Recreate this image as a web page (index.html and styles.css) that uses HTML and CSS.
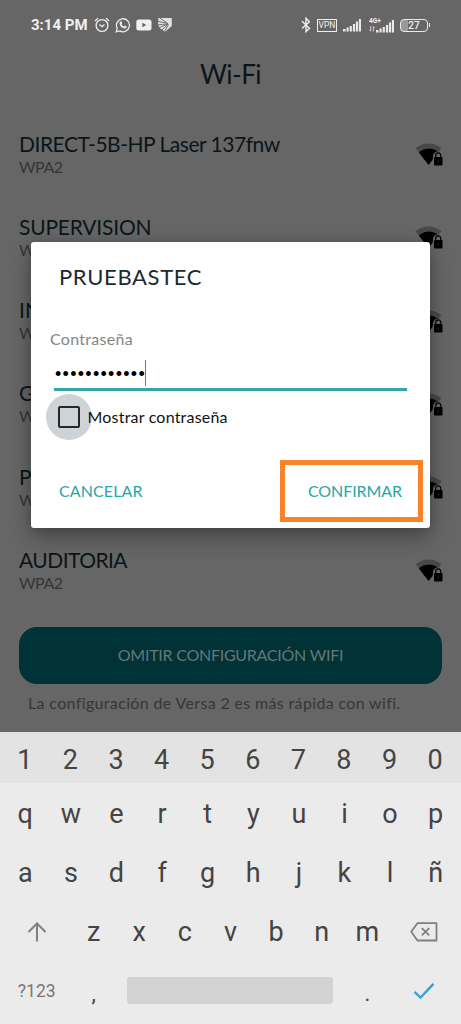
FILE: index.html
```html
<!DOCTYPE html>
<html lang="es">
<head>
<meta charset="utf-8">
<title>Wi-Fi</title>
<link rel="stylesheet" href="styles.css">
</head>
<body>
<svg width="0" height="0" class="defs" aria-hidden="true">
  <symbol id="wifi-lock" viewBox="0 0 28 24">
    <path d="M0.500 5.200C8-1.200 19-1.200 26.500 5.200L23 9.300C17.500 4.300 9.500 4.300 3.900 9.300Z" fill="#484848"/>
    <path d="M3.700 9.300C9.500 4.300 17.500 4.300 22.500 8.600C19 9.300 18 11 18 14.300L17.500 17L13.500 22Z" fill="#000"/>
    <rect x="19" y="14" width="8.500" height="8.500" rx="1" fill="#000"/>
    <path d="M20.700 14.500V12.500a2.550 2.550 0 0 1 5.100 0V14.500" fill="none" stroke="#000" stroke-width="1.200"/>
    <circle cx="23.250" cy="18.200" r=".8" fill="#333"/>
  </symbol>
</svg>
<div class="screen">
  <header class="status">
    <span class="clock">3:14 PM</span>
    <div class="status-left">
      <svg width="16" height="16" viewBox="0 0 16 16" fill="none" stroke="#e9e9e9" stroke-width="1.400"><circle cx="8" cy="8.500" r="5.900"/><path d="M1 4L4 1.200M15 4L12 1.200M5.400 7.500L8 9.600L10.500 7.500"/></svg>
      <svg width="16" height="16" viewBox="0 0 16 16"><path d="M1.200 14.900L2.200 11.300A6.500 6.500 0 1 1 4.700 13.900Z" fill="none" stroke="#e9e9e9" stroke-width="1.300"/><path d="M5.300 4.400L6.500 4.300L7.300 6.300L6.600 7.300Q7.400 8.900 9 9.600L10 8.600L11.800 9.500Q11.800 11.500 9.700 11.500Q5.200 10.700 4.500 6.400Q4.500 5 5.300 4.400Z" fill="#e9e9e9"/></svg>
      <svg width="16" height="12" viewBox="0 0 16 12"><rect x=".3" y=".5" width="15.200" height="11" rx="2.500" fill="#efefef"/><path d="M6.300 3.700V8.300L10.300 6Z" fill="#666"/></svg>
      <svg width="16" height="16" viewBox="0 0 16 16"><path d="M1.500 1H14.800V9L8 14.800L2.500 11L1 7Z" fill="#e0e0e0"/><path d="M0 4.300L10.500 6.200L3 1.200M0 8L11 6.800L1 11.300M11 7.300L4 13.800M11.500 7.500L7.500 14.500" stroke="#666" stroke-width=".9" fill="none"/></svg>
    </div>
    <div class="status-right">
      <svg width="10" height="16" viewBox="0 0 10 16" fill="none" stroke="#eee" stroke-width="1.400"><path d="M1 4.300L8.400 11.200L5 14.600V1.200L8.400 4.700L1 11.600"/></svg>
      <span class="vpn">VPN</span>
      <svg class="signal" width="18" height="13" viewBox="0 0 18 13" fill="#e9e9e9"><path d="M0 10h2.500v2.500H0zM3.500 8.500h2.200v4H3.500zM6.700 7h2.200v5.500H6.700zM9.900 5h2.200v7.500H9.900zM12.900 2.500h2.200v10h-2.200zM15.900 0H18v12.500h-2.100z"/></svg>
      <div class="data">
        <span class="net">4G+</span>
        <svg class="updown" width="6" height="6" viewBox="0 0 6 6" fill="none" stroke="#ddd" stroke-width=".9"><path d="M1.700 0V5M.3 3.800L1.700 5.200M4.300 5.500V.6M4.300.6L5.800 2"/></svg>
        <svg class="bars" width="18" height="13" viewBox="0 0 18 13" fill="#e9e9e9"><path d="M0 10h2.500v2.500H0zM3.500 8.500h2.200v4H3.500zM6.700 7h2.200v5.500H6.700zM9.900 5h2.200v7.500H9.900zM12.900 2.500h2.200v10h-2.200zM15.900 0H18v12.500h-2.100z"/></svg>
      </div>
      <span class="battery">27</span>
    </div>
  </header>
  <h1 class="title">Wi-Fi</h1>
  <ul class="networks">
    <li><div><b class="n1">DIRECT-5B-HP Laser 137fnw</b><i>WPA2</i></div><svg><use href="#wifi-lock"/></svg></li>
    <li><div><b class="n2">SUPERVISION</b><i>WPA2</i></div><svg><use href="#wifi-lock"/></svg></li>
    <li><div><b>IN</b><i>WPA2</i></div><svg><use href="#wifi-lock"/></svg></li>
    <li><div><b>G</b><i>WPA2</i></div><svg><use href="#wifi-lock"/></svg></li>
    <li><div><b>P</b><i>WPA2</i></div><svg><use href="#wifi-lock"/></svg></li>
    <li><div><b class="n6">AUDITORIA</b><i>WPA2</i></div><svg><use href="#wifi-lock"/></svg></li>
  </ul>
  <button class="skip">OMITIR CONFIGURACIÓN WIFI</button>
  <p class="note">La configuración de Versa 2 es más rápida con wifi.</p>

  <section class="keyboard">
    <div class="row digits"><span>1</span><span>2</span><span>3</span><span>4</span><span>5</span><span>6</span><span>7</span><span>8</span><span>9</span><span>0</span></div>
    <div class="row"><span>q</span><span>w</span><span>e</span><span>r</span><span>t</span><span>y</span><span>u</span><span>i</span><span>o</span><span>p</span></div>
    <div class="row"><span>a</span><span>s</span><span>d</span><span>f</span><span>g</span><span>h</span><span>j</span><span>k</span><span>l</span><span>ñ</span></div>
    <div class="row">
      <span class="wide"><svg width="20" height="22" viewBox="0 0 20 22" fill="none" stroke="#808080" stroke-width="2"><path d="M10 20.500V3M1.500 11L10 2.500L18.500 11"/></svg></span>
      <span>z</span><span>x</span><span>c</span><span>v</span><span>b</span><span>n</span><span>m</span>
      <span class="wide"><svg width="28" height="20" viewBox="0 0 28 20" fill="none" stroke="#808080" stroke-width="1.800"><path d="M7.500 1.200H26.500V18.500H7.500L1.200 9.800Z" stroke-linejoin="round"/><path d="M11.800 6.200L19.200 13.400M19.200 6.200L11.800 13.400"/></svg></span>
    </div>
    <div class="row">
      <span class="wide symbols">?123</span><span class="comma">,</span>
      <span class="space"></span><span class="period">.</span>
      <span class="wide"><svg width="22" height="18" viewBox="0 0 22 18" fill="none" stroke="#3d9fd6" stroke-width="2.400"><path d="M1.500 9.800L7.500 15.500L20.500 1.800"/></svg></span>
    </div>
  </section>

  <section class="dialog">
    <h2>PRUEBASTEC</h2>
    <label class="label">Contraseña</label>
    <div class="field"><span class="dots">••••••••••••</span><span class="caret"></span></div>
    <div class="check"><span class="ripple"><span class="box"></span></span><span class="show">Mostrar contraseña</span></div>
    <div class="actions"><span class="cancel">CANCELAR</span><span class="confirm">CONFIRMAR</span></div>
  </section>
</div>
</body>
</html>
```
FILE: styles.css
```css
* { box-sizing: border-box; }
body { margin: 0; background: #666; font-family: Lato, "Open Sans", sans-serif; }
.defs { position: absolute; }
.screen { position: relative; width: 461px; height: 1024px; overflow: hidden; display: flex; flex-direction: column; background: #666; }

.status { height: 50px; padding: 0 32px 0 31px; display: flex; align-items: center; color: #f0f0f0; font-family: Roboto, sans-serif; }
.clock { font-size: 15px; font-weight: 700; width: 62.500px; white-space: nowrap; }
.status-left { display: flex; align-items: center; gap: 5.300px; }
.status-right { margin-left: auto; display: flex; align-items: center; }
.vpn { width: 20px; height: 13px; margin: 0 6px 0 6px; border: 1px solid #eee; font-size: 8.500px; line-height: 11.500px; font-weight: 400; display: flex; justify-content: center; }
.data { width: 25px; height: 15px; margin: 0 6px 0 8px; display: grid; grid-template: 7px 8px / 7px 18px; }
.net { font-size: 6.500px; font-weight: 700; line-height: 6px; z-index: 1; }
.updown { grid-row: 2; align-self: center; }
.bars { grid-area: 1 / 2 / 3 / 3; align-self: end; }
.battery { position: relative; width: 28px; height: 13px; margin-right: 1px; border: 1.500px solid #e9e9e9; border-radius: 4px; font-size: 10px; font-weight: 500; line-height: 11px; text-align: center; background: linear-gradient(90deg, #999 7px, transparent 7px); }
.battery::after { content: ""; position: absolute; right: -3px; top: 3px; width: 1.500px; height: 4px; background: #e9e9e9; }

.title { margin: 8px 0 0; height: 32px; line-height: 32px; text-align: center; font-size: 26px; font-weight: 400; letter-spacing: -.5px; color: #0b1519; }
.networks { list-style: none; margin: 0; padding: 40.500px 18px 0 19px; height: 537px; color: #0b1519; }
.networks li { height: 83.300px; display: flex; justify-content: space-between; }
.networks b { display: block; font-weight: 400; font-size: 21px; line-height: 26px; white-space: nowrap; }
.networks .n1 { letter-spacing: -.48px; }
.networks .n2 { letter-spacing: -.2px; }
.networks .n6 { letter-spacing: -.55px; }
.networks i { display: block; font-style: normal; font-size: 16px; line-height: 20px; letter-spacing: -.5px; color: #353535; }
.networks svg { width: 28px; height: 24px; margin-top: 12.500px; }
.skip { flex: none; height: 57px; margin: 0 19px; padding: 0 0 2px; border: 0; border-radius: 18px; background: #003236; color: #667779; font: 400 16px Lato, sans-serif; letter-spacing: -.26px; white-space: nowrap; }
.note { margin: 7px 0 0 28px; height: 41px; font-size: 16px; line-height: 24px; letter-spacing: .35px; color: #363636; white-space: nowrap; }

.keyboard { height: 292px; background: #ebebeb; color: #444; font: 27px Roboto, sans-serif; }
.row { display: flex; height: 59.250px; padding: 2px 2.500px 0; }
.row span { width: 45.600px; display: flex; align-items: center; justify-content: center; }
.row.digits { height: 51px; padding: 4px 2px 0; background: #e3e3e3; }
.row .wide { width: 68.400px; }
.row .symbols { font-size: 17.500px; color: #777; }
.row .comma { font-size: 22px; padding-top: 4px; }
.row .period { font-size: 22px; padding-top: 4px; }
.row .space { width: 206px; height: 27px; margin: 14px 11px 0 11px; border-radius: 3px; background: #d2d2d2; }

.dialog { position: absolute; left: 31px; top: 242px; width: 399px; height: 286px; border-radius: 3px; background: #fff; box-shadow: 0 10px 22px rgba(0,0,0,.3), 0 0 10px rgba(0,0,0,.15); }
.dialog h2 { margin: 21px 0 0 28px; font-size: 22px; font-weight: 400; line-height: 28px; letter-spacing: .65px; color: #1b2931; }
.label { display: block; margin: 38px 0 0 19px; font-size: 16px; line-height: 20px; letter-spacing: .3px; color: #858585; }
.field { display: flex; margin: 10px 23px 0 23px; height: 32px; border-bottom: 3px solid #34a6aa; }
.dots { padding-left: 1px; font: 18px "Liberation Sans", sans-serif; line-height: 30px; letter-spacing: 1.280px; color: #000; }
.caret { width: 1px; height: 26px; margin: 1px 0 0 -1px; background: #777; }
.check { display: flex; align-items: center; height: 46px; margin: 3px 0 0 14.500px; }
.ripple { width: 46px; height: 46px; border-radius: 50%; background: #cfd3d5; display: flex; align-items: center; justify-content: center; }
.box { width: 22px; height: 22px; border: 2px solid #1b2a35; border-radius: 2px; }
.show { margin: 0 0 2px -4px; font-size: 16px; letter-spacing: .2px; color: #111; }
.actions { display: flex; justify-content: space-between; align-items: center; margin: 20px 7px 0 28px; height: 62px; font-size: 16px; color: #28a5a8; }
.cancel { letter-spacing: .1px; padding-bottom: 1px; }
.confirm { width: 143px; height: 62px; border: 5px solid #f9832d; line-height: 51px; padding-left: 23px; letter-spacing: -.1px; }
```
